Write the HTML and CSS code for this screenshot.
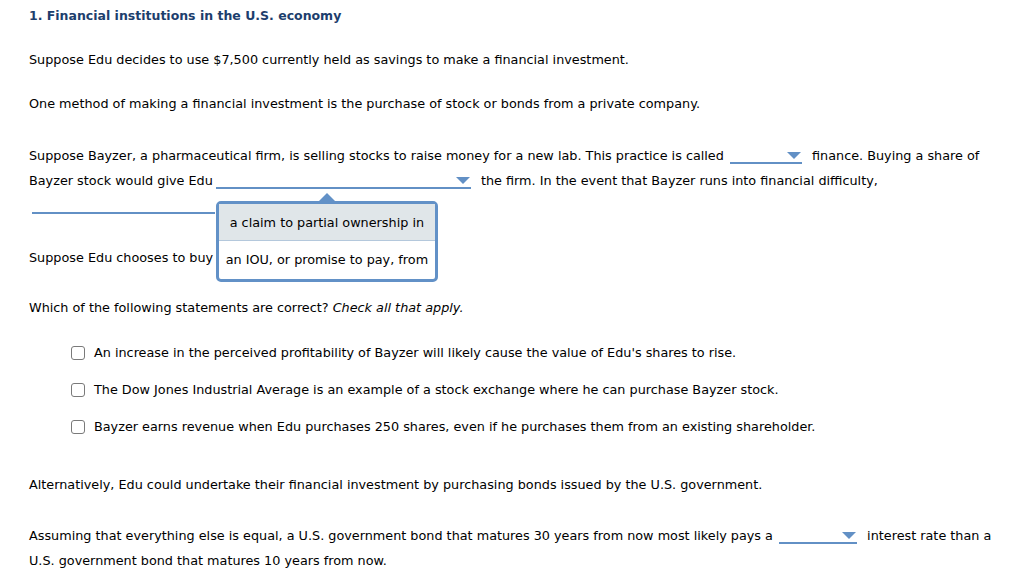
FILE: index.html
```html
<!DOCTYPE html>
<html>
<head>
<meta charset="utf-8">
<link rel="stylesheet" href="styles.css">
</head>
<body>
<div class="page">
  <h1 class="title">1. Financial institutions in the U.S. economy</h1>
  <p class="para p1">Suppose Edu decides to use $7,500 currently held as savings to make a financial investment.</p>
  <p class="para p2">One method of making a financial investment is the purchase of stock or bonds from a private company.</p>
  <p class="para p3">Suppose Bayzer, a pharmaceutical firm, is selling stocks to raise money for a new lab. This practice is called <span class="dd dd-a"></span> finance. Buying a share of Bayzer stock would give Edu <span class="dd dd-b"><span class="popup"><span class="opt opt-hi">a claim to partial ownership in</span><span class="opt">an IOU, or promise to pay, from</span></span></span> the firm. In the event that Bayzer runs into financial difficulty, <span class="dd dd-c"></span> <span class="hidden-text">is paid before the holders.</span></p>
  <p class="para p4">Suppose Edu chooses to buy <span class="dd dd-d"></span></p>
  <p class="para p5">Which of the following statements are correct? <em>Check all that apply.</em></p>
  <ul class="checks">
    <li class="check"><span class="box"></span><span>An increase in the perceived profitability of Bayzer will likely cause the value of Edu's shares to rise.</span></li>
    <li class="check"><span class="box"></span><span>The Dow Jones Industrial Average is an example of a stock exchange where he can purchase Bayzer stock.</span></li>
    <li class="check"><span class="box"></span><span>Bayzer earns revenue when Edu purchases 250 shares, even if he purchases them from an existing shareholder.</span></li>
  </ul>
  <p class="para p6">Alternatively, Edu could undertake their financial investment by purchasing bonds issued by the U.S. government.</p>
  <p class="para p7">Assuming that everything else is equal, a U.S. government bond that matures 30 years from now most likely pays a <span class="dd dd-e"></span> interest rate than a U.S. government bond that matures 10 years from now.</p>
</div>
</body>
</html>
```
FILE: styles.css
```css
* { box-sizing: border-box; }
html, body { margin: 0; padding: 0; background: #fff; }
body {
  font-family: "DejaVu Sans", Verdana, sans-serif;
  font-size: 12.8px;
  color: #000;
}
.page {
  width: 1000px;
  padding: 6px 0 0 29px;
}
.title {
  margin: 0;
  font-size: 12.5px;
  line-height: 20px;
  font-weight: bold;
  color: #1d3e6d;
}
.para {
  margin: 0;
  line-height: 25px;
}
.p1 { margin-top: 21px; }
.p2 { margin-top: 19px; }
.p3 { margin-top: 27px; }
.p4 { margin-top: 27px; }
.p5 { margin-top: 25px; }
.p6 { margin-top: 33px; }
.p7 { margin-top: 26px; }

.dd {
  display: inline-block;
  position: relative;
  height: 16px;
  vertical-align: -4px;
  border-bottom: 2px solid #6290c5;
  margin: 0 6px 0 2px;
}
.dd::after {
  content: "";
  position: absolute;
  right: 1px;
  top: 4px;
  border-left: 7px solid transparent;
  border-right: 7px solid transparent;
  border-top: 7px solid #6290c5;
}
.dd-a { width: 72px; }
.dd-b { width: 255px; margin-left: -1px; }
.dd-c { width: 183px; margin-left: 3px; }
.dd-c::after, .dd-d::after { display: none; }
.dd-d { width: 200px; }
.dd-e { width: 78px; }
.hidden-text { color: #000; }

.popup {
  position: absolute;
  left: 0;
  top: 28px;
  z-index: 5;
  width: 222px;
  border: 3px solid #6291c7;
  border-radius: 5px;
  background: #fff;
  display: flex;
  flex-direction: column;
}
.popup::before {
  content: "";
  position: absolute;
  left: 100px;
  top: -11px;
  border-left: 8px solid transparent;
  border-right: 8px solid transparent;
  border-bottom: 8px solid #6291c7;
}
.opt {
  display: block;
  height: 38px;
  line-height: 38px;
  text-align: center;
  white-space: nowrap;
  color: #000;
}
.opt-hi {
  background: #e0e6e9;
  border-bottom: 1px solid #b4c8dc;
  height: 37px;
  line-height: 37px;
}

.checks {
  list-style: none;
  margin: 20px 0 0 0;
  padding: 0 0 0 42px;
  display: flex;
  flex-direction: column;
  gap: 12px;
}
.check {
  display: flex;
  align-items: center;
  gap: 9px;
  line-height: 25px;
}
.box {
  width: 14px;
  height: 14px;
  border: 1px solid #7a7a7a;
  border-radius: 3px;
  background: #fff;
  flex: none;
}
```
